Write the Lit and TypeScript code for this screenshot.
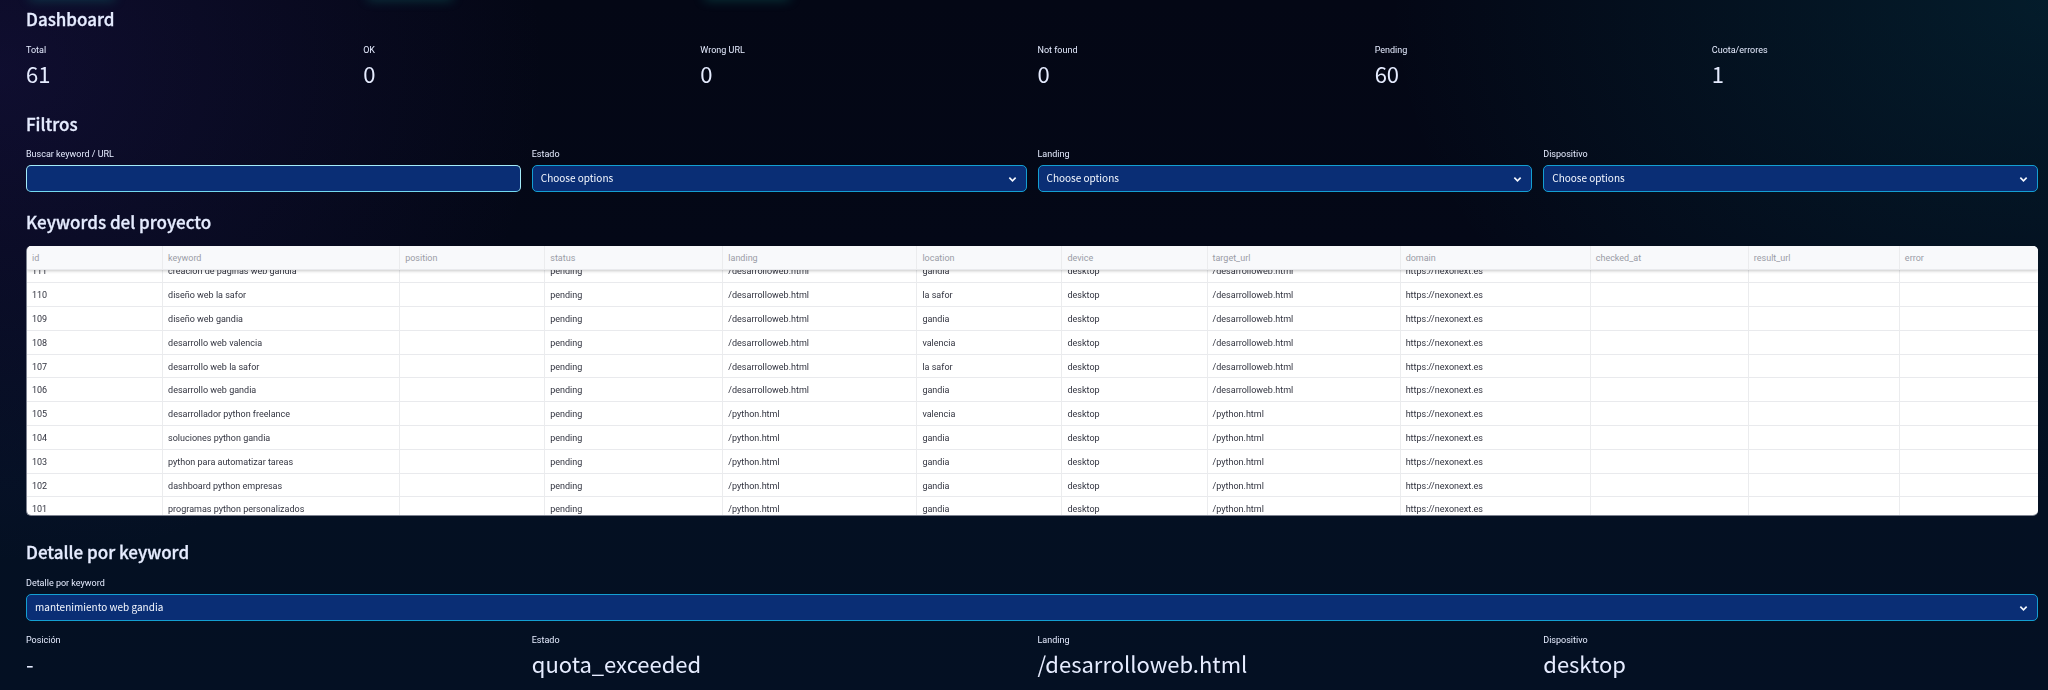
import { LitElement, html, css, svg } from "lit";
import { customElement, property, query } from "lit/decorators.js";

const COLUMNS: { name: string; share: number }[] = [
  { name: "id", share: 136 },
  { name: "keyword", share: 237 },
  { name: "position", share: 145 },
  { name: "status", share: 178 },
  { name: "landing", share: 194 },
  { name: "location", share: 145 },
  { name: "device", share: 145 },
  { name: "target_url", share: 193 },
  { name: "domain", share: 190 },
  { name: "checked_at", share: 158 },
  { name: "result_url", share: 151 },
  { name: "error", share: 138 },
];
const TOTAL_SHARE = COLUMNS.reduce((sum, c) => sum + c.share, 0);

const WEB = "/desarrolloweb.html";
const PY = "/python.html";
const KEYWORDS: [number, string, string, string][] = [
  [111, "creación de páginas web gandia", WEB, "gandia"],
  [110, "diseño web la safor", WEB, "la safor"],
  [109, "diseño web gandia", WEB, "gandia"],
  [108, "desarrollo web valencia", WEB, "valencia"],
  [107, "desarrollo web la safor", WEB, "la safor"],
  [106, "desarrollo web gandia", WEB, "gandia"],
  [105, "desarrollador python freelance", PY, "valencia"],
  [104, "soluciones python gandia", PY, "gandia"],
  [103, "python para automatizar tareas", PY, "gandia"],
  [102, "dashboard python empresas", PY, "gandia"],
  [101, "programas python personalizados", PY, "gandia"],
];

const chevron = svg`<path d="M1.5 2.5 L5 6 L8.5 2.5" fill="none" stroke="currentColor" stroke-width="1.8"/>`;

@customElement("metric-tile")
export class MetricTile extends LitElement {
  @property() label = "";
  @property() value = "";

  static styles = css`
    :host {
      display: block;
      min-width: 0;
    }
    .label {
      font: 9px/12px Roboto, sans-serif;
    }
    .value {
      margin-bottom: 2px;
      font-size: 22px;
      line-height: 34px;
      white-space: nowrap;
    }
  `;

  render() {
    return html`<div class="label">${this.label}</div>
      <div class="value">${this.value}</div>`;
  }
}

@customElement("select-field")
export class SelectField extends LitElement {
  @property() label = "";
  @property() choice = "";

  static styles = css`
    :host {
      display: block;
      min-width: 0;
    }
    label {
      display: block;
      margin-bottom: 5px;
      font: 9px/12px Roboto, sans-serif;
    }
    .box {
      display: grid;
      align-items: center;
    }
    select,
    svg {
      grid-area: 1 / 1;
    }
    select {
      appearance: none;
      box-sizing: border-box;
      width: 100%;
      height: 27px;
      padding: 0 8px 2px;
      border: 1px solid #149fd2;
      border-radius: 5px;
      outline: none;
      background: #0a2e75;
      color: #f6f9ff;
      font: 10px/22px "Noto Sans CJK JP", sans-serif;
    }
    svg {
      justify-self: end;
      width: 9px;
      height: 8px;
      margin-right: 10px;
      color: #f6f9ff;
      pointer-events: none;
    }
  `;

  render() {
    return html`<label for="field">${this.label}</label>
      <div class="box">
        <select id="field"><option>${this.choice}</option></select>
        <svg viewBox="0 0 10 8" aria-hidden="true">${chevron}</svg>
      </div>`;
  }
}

@customElement("keyword-table")
export class KeywordTable extends LitElement {
  @query(".scroller") scroller!: HTMLElement;

  static styles = css`
    :host {
      display: block;
    }
    .scroller {
      box-sizing: border-box;
      height: 270px;
      overflow: auto;
      scrollbar-width: none;
      border: solid #7d8290;
      border-width: 0 0 1px 1px;
      border-radius: 5px;
      background: #fff;
    }
    table {
      width: 100%;
      table-layout: fixed;
      border-collapse: separate;
      border-spacing: 0;
      color: #31333f;
      font: 9px/12px Roboto, sans-serif;
    }
    th,
    td {
      box-sizing: border-box;
      height: 24px;
      padding: 1px 5px 0;
      border-right: 1px solid #ebecee;
      border-bottom: 1px solid #e9eaed;
      font-weight: 400;
      text-align: left;
      white-space: nowrap;
      overflow: hidden;
      text-overflow: ellipsis;
    }
    tr:nth-child(5n) td {
      height: 23px;
    }
    th:last-child,
    td:last-child {
      border-right: 0;
    }
    thead {
      position: sticky;
      top: 0;
      box-shadow: 0 1px 3px rgba(0, 0, 0, 0.22);
    }
    th {
      background: #f8f9fb;
      color: #9a9ca6;
    }
  `;

  firstUpdated() {
    this.scroller.scrollTop = 11;
  }

  render() {
    return html`<div class="scroller">
      <table>
        <colgroup>
          ${COLUMNS.map((c) => html`<col style="width:${(c.share / TOTAL_SHARE) * 100}%" />`)}
        </colgroup>
        <thead>
          <tr>${COLUMNS.map((c) => html`<th scope="col">${c.name}</th>`)}</tr>
        </thead>
        <tbody>
          ${KEYWORDS.map(
            ([id, keyword, landing, location]) => html`<tr>
              <td>${id}</td>
              <td>${keyword}</td>
              <td></td>
              <td>pending</td>
              <td>${landing}</td>
              <td>${location}</td>
              <td>desktop</td>
              <td>${landing}</td>
              <td>https://nexonext.es</td>
              <td></td>
              <td></td>
              <td></td>
            </tr>`
          )}
        </tbody>
      </table>
    </div>`;
  }
}

@customElement("app-root")
export class AppRoot extends LitElement {
  static styles = css`
    :host {
      display: block;
      position: relative;
      box-sizing: border-box;
      min-height: 100vh;
      overflow: hidden;
      padding: 7px 10px 12px 26px;
      background:
        radial-gradient(ellipse 28% 75% at 0% 10%, rgba(60, 40, 150, 0.2), transparent 95%),
        radial-gradient(ellipse 34% 75% at 100% 0%, rgba(0, 170, 190, 0.13), transparent 95%),
        linear-gradient(180deg, #040715 0%, #040817 35%, #041022 70%, #041023 100%);
      color: #e6ecff;
      font-family: "Noto Sans CJK JP", "Source Sans Pro", sans-serif;
    }
    .glows {
      position: absolute;
      inset: -10px 10px auto 29px;
      display: grid;
      grid-template-columns: repeat(6, 1fr);
      gap: 16px;
    }
    .glow {
      width: 86px;
      height: 6px;
      border-radius: 5px;
      box-shadow: 0 3px 12px rgba(20, 190, 170, 0.38);
    }
    h3 {
      margin: 0;
      font-size: 17px;
      line-height: 24px;
      font-weight: 500;
      -webkit-text-stroke: 0.3px currentColor;
    }
    .six,
    .four {
      display: grid;
      grid-template-columns: repeat(4, minmax(0, 1fr));
      gap: 11px;
    }
    .six {
      grid-template-columns: repeat(6, minmax(0, 1fr));
      margin-top: 13px;
    }
    .filters {
      margin-top: 12px;
    }
    .filters-title {
      margin-top: 20px;
    }
    .section-title {
      margin-top: 18px;
    }
    .grid-block {
      margin-top: 12px;
    }
    .detail-title {
      margin-top: 24px;
    }
    .detail {
      margin-top: 13px;
    }
    .text-field label {
      display: block;
      margin-bottom: 5px;
      font: 9px/12px Roboto, sans-serif;
    }
    .text-field input {
      display: block;
      box-sizing: border-box;
      width: 100%;
      height: 27px;
      padding: 0 8px;
      border: 1px solid #a5ecfa;
      border-bottom-color: #74daf0;
      border-radius: 5px;
      outline: none;
      background: #0a2e75;
      color: #f6f9ff;
      font: 10px/24px "Noto Sans CJK JP", sans-serif;
    }
  `;

  render() {
    return html`
      <div class="glows" aria-hidden="true">
        <div class="glow"></div>
        <div class="glow"></div>
        <div class="glow"></div>
      </div>
      <section>
        <h3>Dashboard</h3>
        <div class="six">
          <metric-tile label="Total" value="61"></metric-tile>
          <metric-tile label="OK" value="0"></metric-tile>
          <metric-tile label="Wrong URL" value="0"></metric-tile>
          <metric-tile label="Not found" value="0"></metric-tile>
          <metric-tile label="Pending" value="60"></metric-tile>
          <metric-tile label="Cuota/errores" value="1"></metric-tile>
        </div>
      </section>
      <section>
        <h3 class="filters-title">Filtros</h3>
        <div class="four filters">
          <div class="text-field">
            <label for="search">Buscar keyword / URL</label>
            <input id="search" type="text" />
          </div>
          <select-field label="Estado" choice="Choose options"></select-field>
          <select-field label="Landing" choice="Choose options"></select-field>
          <select-field label="Dispositivo" choice="Choose options"></select-field>
        </div>
      </section>
      <section>
        <h3 class="section-title">Keywords del proyecto</h3>
        <keyword-table class="grid-block"></keyword-table>
      </section>
      <section>
        <h3 class="detail-title">Detalle por keyword</h3>
        <select-field class="detail" label="Detalle por keyword" choice="mantenimiento web gandia"></select-field>
        <div class="four detail">
          <metric-tile label="Posición" value="-"></metric-tile>
          <metric-tile label="Estado" value="quota_exceeded"></metric-tile>
          <metric-tile label="Landing" value="/desarrolloweb.html"></metric-tile>
          <metric-tile label="Dispositivo" value="desktop"></metric-tile>
        </div>
      </section>
    `;
  }
}
